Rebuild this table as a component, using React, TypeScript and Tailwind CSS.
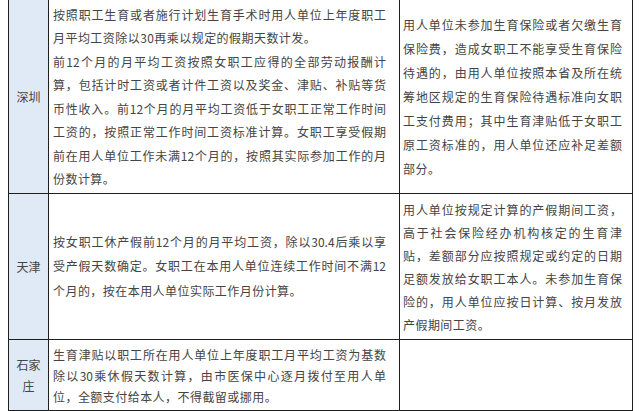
import React from 'react';

type Cell = { lines: string[]; leading: string; pad: string };

// each visual line is its own block; lines that end a paragraph are left aligned
function Lines({ lines, leading }: { lines: string[]; leading: string }) {
  return (
    <div className={leading}>
      {lines.map((l, i) => {
        const last = l.endsWith('。') || i === lines.length - 1;
        return (
          <div
            key={i}
            className={
              last
                ? 'whitespace-nowrap tracking-[0.45px]'
                : 'whitespace-nowrap text-justify [text-align-last:justify]'
            }
          >
            {l}
          </div>
        );
      })}
    </div>
  );
}

const rows: {
  city: string[];
  h: string;
  mid: Cell;
  right: Cell | null;
}[] = [
  {
    city: ['深圳'],
    h: 'h-[193px]',
    mid: {
      leading: 'leading-[23.5px]',
      pad: 'pl-[4px] w-[337px]',
      lines: [
        '按照职工生育或者施行计划生育手术时用人单位上年度职工',
        '月平均工资除以30再乘以规定的假期天数计发。',
        '前12个月的月平均工资按照女职工应得的全部劳动报酬计',
        '算，包括计时工资或者计件工资以及奖金、津贴、补贴等货',
        '币性收入。前12个月的月平均工资低于女职工正常工作时间',
        '工资的，按照正常工作时间工资标准计算。女职工享受假期',
        '前在用人单位工作未满12个月的，按照其实际参加工作的月',
        '份数计算。',
      ],
    },
    right: {
      leading: 'leading-[24px]',
      pad: 'pl-[3px] w-[222px]',
      lines: [
        '用人单位未参加生育保险或者欠缴生育',
        '保险费，造成女职工不能享受生育保险',
        '待遇的，由用人单位按照本省及所在统',
        '筹地区规定的生育保险待遇标准向女职',
        '工支付费用；其中生育津贴低于女职工',
        '原工资标准的，用人单位还应补足差额',
        '部分。',
      ],
    },
  },
  {
    city: ['天津'],
    h: 'h-[146px]',
    mid: {
      leading: 'leading-[24.5px]',
      pad: 'pl-[4px] w-[337px]',
      lines: [
        '按女职工休产假前12个月的月平均工资，除以30.4后乘以享',
        '受产假天数确定。女职工在本用人单位连续工作时间不满12',
        '个月的，按在本用人单位实际工作月份计算。',
      ],
    },
    right: {
      leading: 'leading-[23px]',
      pad: 'pl-[3px] w-[222px]',
      lines: [
        '用人单位按规定计算的产假期间工资，',
        '高于社会保险经办机构核定的生育津',
        '贴，差额部分应按照规定或约定的日期',
        '足额发放给女职工本人。未参加生育保',
        '险的，用人单位应按日计算、按月发放',
        '产假期间工资。',
      ],
    },
  },
  {
    city: ['石家', '庄'],
    h: 'h-[71px]',
    mid: {
      leading: 'leading-[21px]',
      pad: 'pl-[4px] w-[337px]',
      lines: [
        '生育津贴以职工所在用人单位上年度职工月平均工资为基数',
        '除以30乘休假天数计算，由市医保中心逐月拨付至用人单',
        '位，全额支付给本人，不得截留或挪用。',
      ],
    },
    right: null,
  },
];

export default function App() {
  return (
    <div
      className="w-[640px] h-[411px] overflow-hidden bg-white text-[12px] text-[#444]"
      style={{ fontFamily: '"Noto Sans CJK SC", "Noto Sans", sans-serif' }}
    >
      <div className="ml-[8px] w-[625px] border-x border-b border-[#1f1f1f]">
        {rows.map((r, i) => (
          <div
            key={i}
            className={`flex ${r.h} ${i > 0 ? 'border-t border-[#1f1f1f]' : ''}`}
          >
            <div className="w-[40px] shrink-0 flex flex-col items-center justify-center bg-[#dfeaf6] border-r border-[#1f1f1f] leading-[21px]">
              {r.city.map((c) => (
                <div key={c}>{c}</div>
              ))}
            </div>
            <div className="w-[351px] shrink-0 flex items-center border-r border-[#1f1f1f]">
              <div className={r.mid.pad}>
                <Lines lines={r.mid.lines} leading={r.mid.leading} />
              </div>
            </div>
            <div className="flex-1 flex items-center">
              {r.right && (
                <div className={r.right.pad}>
                  <Lines lines={r.right.lines} leading={r.right.leading} />
                </div>
              )}
            </div>
          </div>
        ))}
      </div>
    </div>
  );
}
